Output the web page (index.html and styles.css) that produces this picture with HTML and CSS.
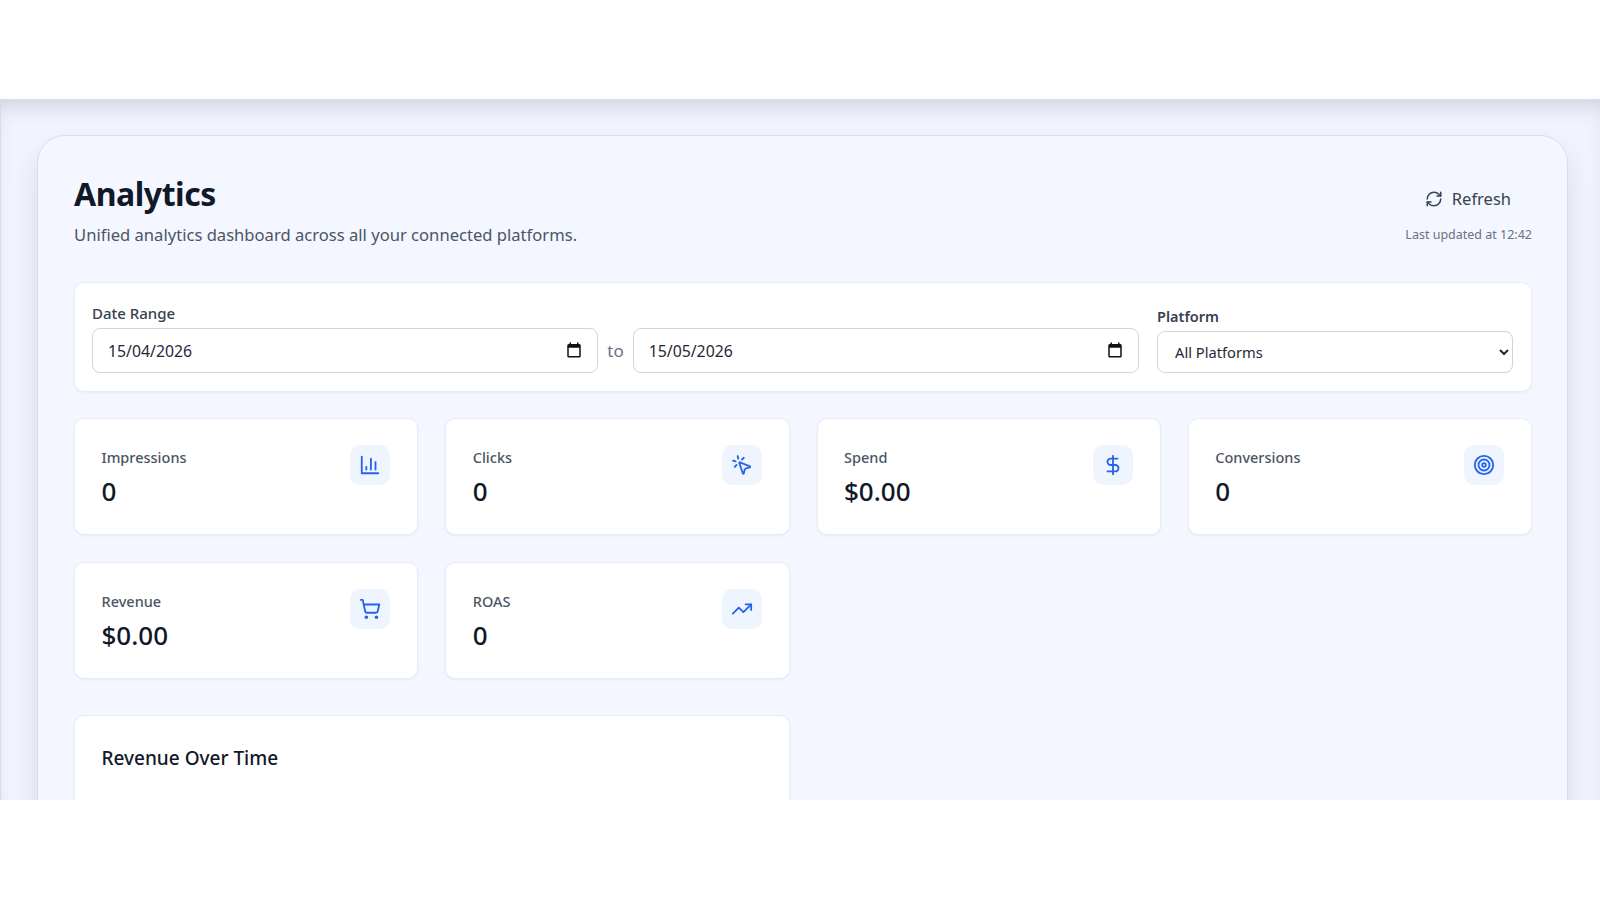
FILE: index.html
```html
<!DOCTYPE html>
<html>
<head>
  <title>Analytics</title>
  <link rel="stylesheet" href="styles.css">
</head>
<body>

<div class="top-space"></div>

<div class="stage">
  <div class="panel">
    <div class="page-head">
      <div>
        <h1>Analytics</h1>
        <p class="subtitle">Unified analytics dashboard across all your connected platforms.</p>
      </div>
      <div class="head-actions">
        <button class="refresh-btn">
          <svg class="refresh-icon" viewBox="0 0 24 24"><path d="M3 12a9 9 0 0 1 9-9 9.75 9.75 0 0 1 6.74 2.74L21 8"/><path d="M21 3v5h-5"/><path d="M21 12a9 9 0 0 1-9 9 9.75 9.75 0 0 1-6.74-2.74L3 16"/><path d="M8 16H3v5"/></svg>
          Refresh
        </button>
        <span class="updated">Last updated at 12:42</span>
      </div>
    </div>

    <div class="filters">
      <div class="date-group">
        <label class="filter-label">Date Range</label>
        <div class="date-row">
          <div class="date-field">
            <span>15/04/2026</span>
            <svg class="cal-icon" viewBox="0 0 24 24"><path d="M19 4h-1V2h-2v2H8V2H6v2H5a2 2 0 0 0-2 2v14a2 2 0 0 0 2 2h14a2 2 0 0 0 2-2V6a2 2 0 0 0-2-2zm0 16H5V9h14v11z"/></svg>
          </div>
          <span class="to">to</span>
          <div class="date-field">
            <span>15/05/2026</span>
            <svg class="cal-icon" viewBox="0 0 24 24"><path d="M19 4h-1V2h-2v2H8V2H6v2H5a2 2 0 0 0-2 2v14a2 2 0 0 0 2 2h14a2 2 0 0 0 2-2V6a2 2 0 0 0-2-2zm0 16H5V9h14v11z"/></svg>
          </div>
        </div>
      </div>
      <div class="platform-group">
        <label class="filter-label platform-label">Platform</label>
        <select class="platform-select">
          <option>All Platforms</option>
        </select>
      </div>
    </div>

    <div class="stats">
      <div class="stat-card">
        <div>
          <div class="stat-label">Impressions</div>
          <div class="stat-value">0</div>
        </div>
        <div class="stat-icon">
          <svg viewBox="0 0 24 24"><path d="M3 3v18h18"/><path d="M13 17V5"/><path d="M18 17V9"/><path d="M8 17v-3"/></svg>
        </div>
      </div>
      <div class="stat-card">
        <div>
          <div class="stat-label">Clicks</div>
          <div class="stat-value">0</div>
        </div>
        <div class="stat-icon">
          <svg viewBox="0 0 24 24"><path d="M14 4.1 12 6"/><path d="m5.1 8-2.9-.8"/><path d="m6 12-1.9 2"/><path d="M7.2 2.2 8 5.1"/><path d="M9.04 9.69a.5.5 0 0 1 .65-.65l11 4.5a.5.5 0 0 1-.07.95l-4.2 1.09a2 2 0 0 0-1.44 1.43l-1.08 4.2a.5.5 0 0 1-.95.07z"/></svg>
        </div>
      </div>
      <div class="stat-card">
        <div>
          <div class="stat-label">Spend</div>
          <div class="stat-value">$0.00</div>
        </div>
        <div class="stat-icon">
          <svg viewBox="0 0 24 24"><path d="M12 2v20"/><path d="M17 5H9.5a3.5 3.5 0 0 0 0 7h5a3.5 3.5 0 0 1 0 7H6"/></svg>
        </div>
      </div>
      <div class="stat-card">
        <div>
          <div class="stat-label">Conversions</div>
          <div class="stat-value">0</div>
        </div>
        <div class="stat-icon">
          <svg viewBox="0 0 24 24"><circle cx="12" cy="12" r="10"/><circle cx="12" cy="12" r="6"/><circle cx="12" cy="12" r="2"/></svg>
        </div>
      </div>
      <div class="stat-card">
        <div>
          <div class="stat-label">Revenue</div>
          <div class="stat-value">$0.00</div>
        </div>
        <div class="stat-icon">
          <svg viewBox="0 0 24 24"><circle cx="8" cy="21" r="1"/><circle cx="19" cy="21" r="1"/><path d="M2.05 2.05h2l2.66 12.42a2 2 0 0 0 2 1.58h9.78a2 2 0 0 0 1.95-1.57l1.65-7.43H5.12"/></svg>
        </div>
      </div>
      <div class="stat-card">
        <div>
          <div class="stat-label">ROAS</div>
          <div class="stat-value">0</div>
        </div>
        <div class="stat-icon">
          <svg viewBox="0 0 24 24"><path d="m22 7-8.5 8.5-5-5L2 17"/><path d="M16 7h6v6"/></svg>
        </div>
      </div>
    </div>

    <div class="charts">
      <div class="chart-card">
        <h3>Revenue Over Time</h3>
      </div>
    </div>
  </div>
</div>

</body>
</html>
```

FILE: styles.css
```css
* {
  box-sizing: border-box;
}

html, body {
  height: 900px;
  overflow: hidden;
}

body {
  margin: 0;
  background-color: #fff;
  font-family: "Noto Sans", Arial, sans-serif;
  color: #111827;
}

.top-space {
  height: 99px;
}

.stage {
  height: 701px;
  overflow: hidden;
  padding: 35px 32px 0 36px;
  background-color: #f1f4fd;
  border-top: 1px solid #d3dcf2;
  border-left: 1px solid #d3dcf2;
  box-shadow: inset 0 14px 20px -8px rgba(50, 60, 90, 0.18);
}

.panel {
  height: 900px;
  padding: 38px 35px 36px 36px;
  background-color: #f4f7ff;
  border: 1px solid #d5def3;
  border-radius: 28px;
  box-shadow: 0 14px 26px rgba(50, 60, 100, 0.12);
}

.page-head {
  display: flex;
  justify-content: space-between;
  align-items: flex-start;
  margin-bottom: 35px;
}

.page-head h1 {
  margin: 0;
  font-size: 32px;
  line-height: 40px;
  font-weight: 700;
  letter-spacing: -0.45px;
}

.subtitle {
  margin: 9px 0 0 0;
  font-size: 16.6px;
  line-height: 24px;
  color: #4b5563;
}

.head-actions {
  display: flex;
  flex-direction: column;
  align-items: flex-end;
  padding-top: 13px;
}

.refresh-btn {
  display: flex;
  align-items: center;
  gap: 9px;
  padding: 0 21px 0 0;
  border: none;
  background: none;
  font-family: inherit;
  font-size: 16.5px;
  line-height: 24px;
  color: #374151;
}

.refresh-icon {
  width: 18px;
  height: 18px;
  fill: none;
  stroke: #374151;
  stroke-width: 2;
  stroke-linecap: round;
  stroke-linejoin: round;
}

.updated {
  margin-top: 15px;
  font-size: 12.5px;
  line-height: 18px;
  color: #6b7280;
}

.filters {
  display: flex;
  align-items: flex-end;
  gap: 18px;
  height: 110px;
  padding: 18px 18px 18px 17px;
  background-color: #fff;
  border: 1px solid #e8ecf5;
  border-radius: 10px;
  box-shadow: 0 1px 3px rgba(0, 0, 0, 0.05);
}

.date-group {
  width: 1047px;
}

.filter-label {
  display: block;
  font-size: 15px;
  line-height: 20px;
  font-weight: 500;
  color: #374151;
}

.date-row {
  display: flex;
  align-items: center;
  gap: 9px;
  margin-top: 5px;
}

.date-field {
  flex: 1;
  display: flex;
  justify-content: space-between;
  align-items: center;
  height: 45px;
  padding: 0 14px 2px 15px;
  background-color: #fff;
  border: 1px solid #d1d5db;
  border-radius: 8px;
  font-size: 15.8px;
  color: #1f2937;
}

.date-field span {
  padding-top: 2px;
}

.cal-icon {
  width: 18px;
  height: 18px;
  fill: #111;
}

.to {
  font-size: 17px;
  color: #6b7280;
}

.platform-group {
  flex: 1;
}

.platform-label {
  font-size: 14.5px;
  font-weight: 600;
}

.platform-select {
  display: block;
  width: 100%;
  height: 42px;
  margin-top: 5px;
  padding: 0 13px;
  background-color: #fff;
  border: 1px solid #d1d5db;
  border-radius: 8px;
  font-family: inherit;
  font-size: 14.7px;
  color: #1f2937;
}

.stats {
  display: grid;
  grid-template-columns: repeat(4, 1fr);
  gap: 27px;
  margin-top: 26px;
}

.stat-card {
  display: flex;
  justify-content: space-between;
  align-items: flex-start;
  height: 117px;
  padding: 26px 27px 26px 26.5px;
  background-color: #fff;
  border: 1px solid #e8ecf5;
  border-radius: 10px;
  box-shadow: 0 1px 3px rgba(0, 0, 0, 0.05);
}

.stat-label {
  font-size: 14.5px;
  line-height: 24px;
  font-weight: 500;
  color: #4b5563;
}

.stat-value {
  margin-top: 6px;
  font-size: 26px;
  line-height: 32px;
  font-weight: 500;
  color: #111827;
}

.stat-icon {
  display: flex;
  justify-content: center;
  align-items: center;
  width: 40px;
  height: 40px;
  background-color: #eff5ff;
  border-radius: 10px;
}

.stat-icon svg {
  width: 22px;
  height: 22px;
  fill: none;
  stroke: #2563eb;
  stroke-width: 2;
  stroke-linecap: round;
  stroke-linejoin: round;
}

.charts {
  display: grid;
  grid-template-columns: repeat(2, 1fr);
  gap: 27px;
  margin-top: 36px;
}

.chart-card {
  height: 400px;
  padding: 26px 26.5px;
  background-color: #fff;
  border: 1px solid #e8ecf5;
  border-radius: 10px;
  box-shadow: 0 1px 3px rgba(0, 0, 0, 0.05);
}

.chart-card h3 {
  margin: 0;
  font-size: 19px;
  line-height: 32px;
  font-weight: 500;
}
```
